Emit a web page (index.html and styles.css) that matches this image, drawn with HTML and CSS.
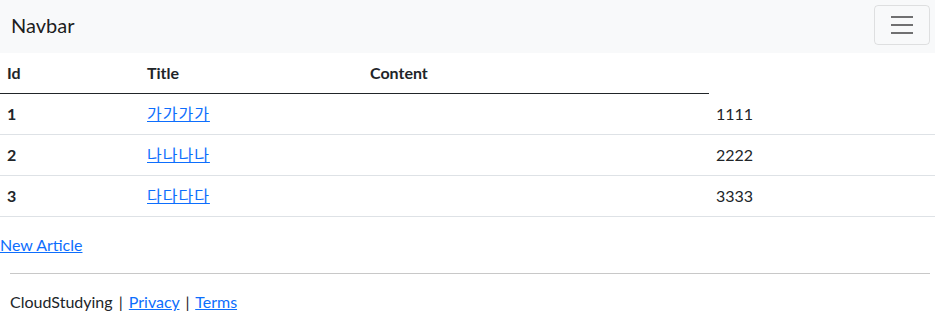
FILE: index.html
```html
<!DOCTYPE html>
<html lang="ko">
<head>
    <meta charset="UTF-8">
    <title>Articles</title>
    <link rel="stylesheet" href="styles.css">
</head>
<body>
<nav class="navbar">
    <a class="navbar-brand" href="#">Navbar</a>
    <button class="navbar-toggler" type="button" aria-label="Toggle navigation">
        <svg width="30" height="30" viewBox="0 0 30 30"><path d="M4 7h22M4 15h22M4 23h22" stroke="rgba(0,0,0,.55)" stroke-width="2" stroke-linecap="butt" fill="none"/></svg>
    </button>
</nav>

<table class="table">
    <thead>
    <tr>
        <th class="c-id">Id</th>
        <th class="c-title">Title</th>
        <th class="c-blank">Content</th>
    </tr>
    </thead>
    <tbody>
    <tr>
        <th>1</th>
        <td><a class="ko" href="#">가가가가</a></td>
        <td></td>
        <td>1111</td>
    </tr>
    <tr>
        <th>2</th>
        <td><a class="ko" href="#">나나나나</a></td>
        <td></td>
        <td>2222</td>
    </tr>
    <tr>
        <th>3</th>
        <td><a class="ko" href="#">다다다다</a></td>
        <td></td>
        <td>3333</td>
    </tr>
    </tbody>
</table>

<a href="#">New Article</a>

<div class="footer">
    <hr>
    <p>CloudStudying | <a href="#">Privacy</a> | <a href="#">Terms</a></p>
</div>
</body>
</html>
```

FILE: styles.css
```css
/*reset*/
body{
    margin:0;
    font-family:"Lato","Noto Sans CJK KR",sans-serif;
    font-size:16px;
    line-height:1.5;
    color:#212529;
}
a{color:#0d6efd;}

/*navbar*/
.navbar{
    display:flex;
    align-items:center;
    justify-content:space-between;
    background-color:#f8f9fa;
    padding:5px 5px 8px 11px;
}
.navbar-brand{
    font-size:20px;
    line-height:30px;
    color:rgba(0,0,0,.9);
    text-decoration:none;
}
.navbar-toggler{
    display:flex;
    align-items:center;
    justify-content:center;
    width:56px;
    height:40px;
    padding:0;
    background:transparent;
    border:1px solid rgba(0,0,0,.1);
    border-radius:4px;
}

/*table*/
.table{
    width:100%;
    border-collapse:collapse;
    margin-bottom:16px;
}
.table th,.table td{
    padding:8px 7px;
    text-align:left;
    vertical-align:top;
    border-bottom:1px solid #dee2e6;
}
.table thead th{border-bottom:1px solid #212529;}
.table .c-id{width:126px;}
.table .c-title{width:209px;}
.table .c-blank{width:332px;}
.table .ko{letter-spacing:1px;}

/*footer*/
.footer{padding:0 5px 0 10px;}
.footer hr{
    margin:16px 0;
    border:0;
    border-top:1px solid #c8c8c8;
}
.footer p{margin:0;word-spacing:2px;}
```
